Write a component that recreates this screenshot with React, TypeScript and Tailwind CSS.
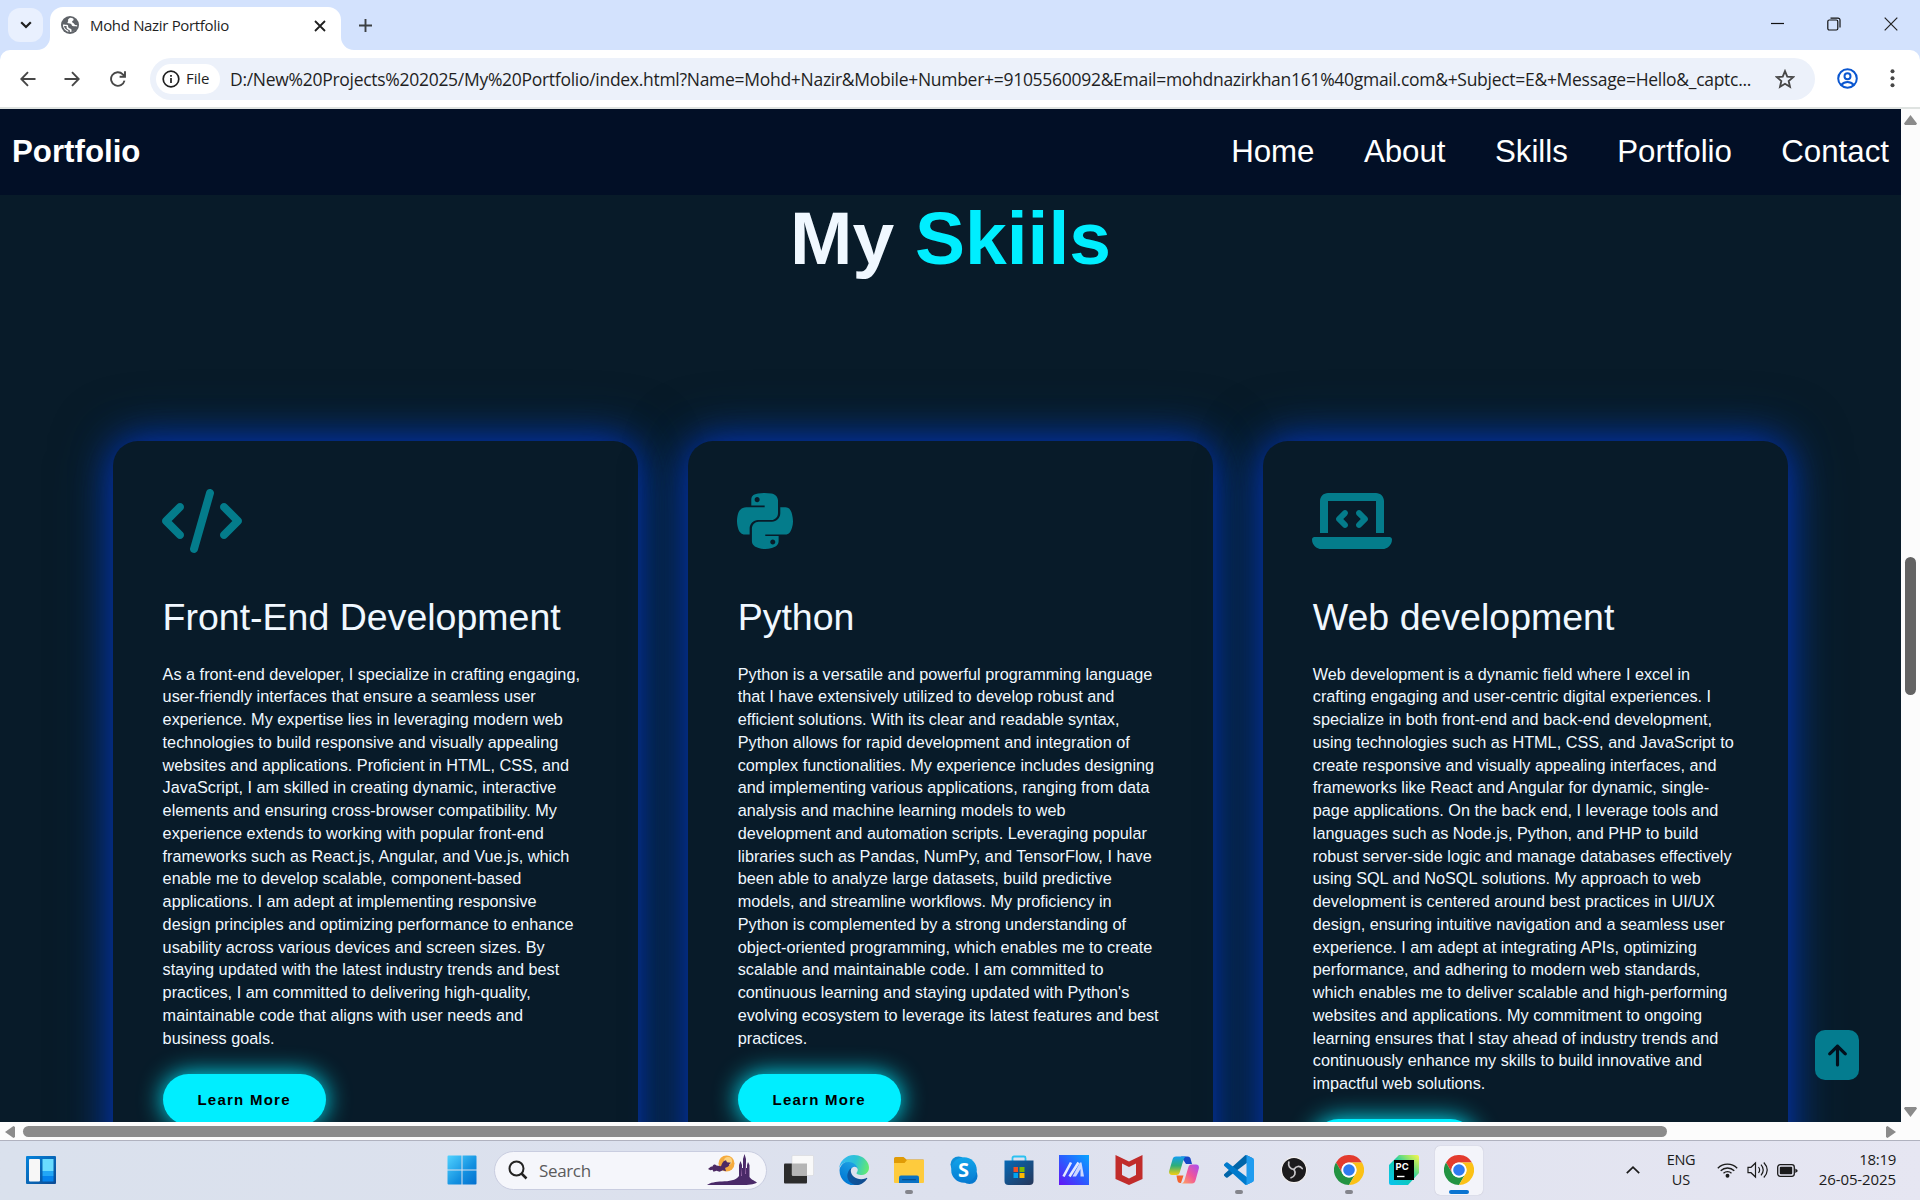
import React from "react";
import { FaCode, FaPython, FaLaptopCode, FaArrowUp } from "react-icons/fa6";

const cards = [
  {
    Icon: FaCode,
    iconClass: "h-16 w-20",
    title: "Front-End Development",
    lines: [
      "As a front-end developer, I specialize in crafting engaging,",
      "user-friendly interfaces that ensure a seamless user",
      "experience. My expertise lies in leveraging modern web",
      "technologies to build responsive and visually appealing",
      "websites and applications. Proficient in HTML, CSS, and",
      "JavaScript, I am skilled in creating dynamic, interactive",
      "elements and ensuring cross-browser compatibility. My",
      "experience extends to working with popular front-end",
      "frameworks such as React.js, Angular, and Vue.js, which",
      "enable me to develop scalable, component-based",
      "applications. I am adept at implementing responsive",
      "design principles and optimizing performance to enhance",
      "usability across various devices and screen sizes. By",
      "staying updated with the latest industry trends and best",
      "practices, I am committed to delivering high-quality,",
      "maintainable code that aligns with user needs and",
      "business goals.",
    ],
  },
  {
    Icon: FaPython,
    iconClass: "h-16 w-14",
    title: "Python",
    lines: [
      "Python is a versatile and powerful programming language",
      "that I have extensively utilized to develop robust and",
      "efficient solutions. With its clear and readable syntax,",
      "Python allows for rapid development and integration of",
      "complex functionalities. My experience includes designing",
      "and implementing various applications, ranging from data",
      "analysis and machine learning models to web",
      "development and automation scripts. Leveraging popular",
      "libraries such as Pandas, NumPy, and TensorFlow, I have",
      "been able to analyze large datasets, build predictive",
      "models, and streamline workflows. My proficiency in",
      "Python is complemented by a strong understanding of",
      "object-oriented programming, which enables me to create",
      "scalable and maintainable code. I am committed to",
      "continuous learning and staying updated with Python's",
      "evolving ecosystem to leverage its latest features and best",
      "practices.",
    ],
  },
  {
    Icon: FaLaptopCode,
    iconClass: "h-16 w-20",
    title: "Web development",
    lines: [
      "Web development is a dynamic field where I excel in",
      "crafting engaging and user-centric digital experiences. I",
      "specialize in both front-end and back-end development,",
      "using technologies such as HTML, CSS, and JavaScript to",
      "create responsive and visually appealing interfaces, and",
      "frameworks like React and Angular for dynamic, single-",
      "page applications. On the back end, I leverage tools and",
      "languages such as Node.js, Python, and PHP to build",
      "robust server-side logic and manage databases effectively",
      "using SQL and NoSQL solutions. My approach to web",
      "development is centered around best practices in UI/UX",
      "design, ensuring intuitive navigation and a seamless user",
      "experience. I am adept at integrating APIs, optimizing",
      "performance, and adhering to modern web standards,",
      "which enables me to deliver scalable and high-performing",
      "websites and applications. My commitment to ongoing",
      "learning ensures that I stay ahead of industry trends and",
      "continuously enhance my skills to build innovative and",
      "impactful web solutions.",
    ],
  },
];

function TabStrip() {
  return (
    <div className="flex h-[50px] bg-[#d3e2fd] pl-2">
      <div className="mt-2 flex h-[34px] w-[35px] items-center justify-center rounded-[12px] bg-[#e9f0fe]">
        <svg width="12" height="8" viewBox="0 0 12 8" fill="none" stroke="#1f1f1f" strokeWidth="2.2">
          <path d="M1.2 1.2 6 6l4.800-4.800" />
        </svg>
      </div>
      <div className="relative ml-[7px] mt-[7px] flex h-[43px] w-[291px] items-center rounded-t-[13px] bg-white pl-[11px] pr-[15px]">
        <svg className="absolute -left-[13px] bottom-0" width="13" height="13" fill="#fff">
          <path d="M13 0v13H0A13 13 0 0 0 13 0Z" />
        </svg>
        <svg className="absolute -right-[13px] bottom-0" width="13" height="13" fill="#fff">
          <path d="M0 0v13h13A13 13 0 0 1 0 0Z" />
        </svg>
        <svg className="-mt-[7px]" width="18" height="18" viewBox="0 0 18 18">
          <circle cx="9" cy="9" r="9" fill="#5f6368" />
          <path
            fill="#fff"
            d="M9.300 1.800c-1.300.8-2.600 1.400-2.200 2.600.4 1-.8 1.400-.6 2.400.3 1 2 .6 3.200 1 1.200.5.800 2 2 2.300 1.400.3 2.700.2 4.500-.2-.6 2.900-2.700 5.400-5.700 6.100-.4-1 .5-1.800-.2-2.800-.8-1-2.200-.6-2.900-1.700-.6-1 .2-2-.8-2.400C5.300 8.700 3.500 8.800 1.900 8.600c0 3.400 2.300 6.500 5.600 7.400l-.3-1.500C4.900 13.700 3.300 12 3 9.900l2.600.2c-.5 2.300.8 3.400 2.900 4 .5.200.2 1.500.5 2 3.900 0 7.100-3.100 7.200-7-1.400.2-2.400-.2-3-1.200-.5-1-1.800-.8-2.100-1.800-.3-1 .8-1.500 1.600-2.100l-.5-1.500c-.8-.4-1.900-.700-2.900-.7Z"
          />
        </svg>
        <span className="-mt-[7px] ml-[11px] grow whitespace-nowrap text-[15px] tracking-[-0.33px] text-[#1f1f1f]">
          Mohd Nazir Portfolio
        </span>
        <svg className="-mt-[6px]" width="12" height="12" viewBox="0 0 12 12" stroke="#1f1f1f" strokeWidth="1.800">
          <path d="m1 1 10 10M11 1 1 11" />
        </svg>
      </div>
      <svg className="ml-[18px] mt-[19px]" width="13" height="13" viewBox="0 0 13 13" stroke="#3c4043" strokeWidth="1.900">
        <path d="M6.500 0v13M0 6.500h13" />
      </svg>
      <div className="ml-auto mr-[22px] flex h-[48px] items-center gap-[43px]">
        <svg width="13" height="14" viewBox="0 0 13 14" stroke="#111" strokeWidth="1.200">
          <path d="M0 6.500h13" />
        </svg>
        <svg width="14" height="14" viewBox="0 0 14 14" fill="none" stroke="#111" strokeWidth="1.200">
          <rect x="0.800" y="3" width="10" height="10" rx="1.500" />
          <path d="M3.500 1.100h7.500a2 2 0 0 1 2 2v7.500" />
        </svg>
        <svg width="14" height="14" viewBox="0 0 14 14" stroke="#222" strokeWidth="1.200">
          <path d="m.7.7 12.600 12.600M13.300.7.7 13.300" />
        </svg>
      </div>
    </div>
  );
}

function Toolbar() {
  return (
    <div className="bg-[#d3e2fd]">
      <div className="flex h-[57px] items-center rounded-t-[10px] bg-white pl-[20px]">
        <svg width="16" height="16" viewBox="0 0 16 16" fill="none" stroke="#474747" strokeWidth="1.900">
          <path d="M15.500 8H1.500M8 1.200 1.300 8 8 14.800" />
        </svg>
        <svg className="ml-[28px]" width="16" height="16" viewBox="0 0 16 16" fill="none" stroke="#474747" strokeWidth="1.900">
          <path d="M.5 8h14M8 1.200 14.700 8 8 14.800" />
        </svg>
        <svg className="ml-[30px]" width="16" height="16" viewBox="0 0 16 16" fill="none" stroke="#474747" strokeWidth="1.900">
          <path d="M14.500 9.600A6.800 6.800 0 1 1 12.800 3.300L15 5.500M15 .3v5.400H9.600" />
        </svg>
        <div className="ml-[24px] flex h-[42px] w-[1665px] items-center rounded-full bg-[#ecf1fa] pl-[6px]">
          <div className="flex h-[30px] w-[64px] items-center rounded-full bg-white pl-[6px] text-[15px] font-medium tracking-[-0.1px] text-[#1f1f1f]">
            <svg width="18" height="18" viewBox="0 0 18 18" fill="none" stroke="#1f1f1f" strokeWidth="1.700">
              <circle cx="9" cy="9" r="7.800" />
              <path d="M9 8v5M9 5v1.700" />
            </svg>
            <span className="ml-[6px]">File</span>
          </div>
          <span className="ml-[10px] mt-[2px] whitespace-nowrap text-[17.5px] tracking-[-0.285px] text-[#1f1f1f]">
            D:/New%20Projects%202025/My%20Portfolio/index.html?Name=Mohd+Nazir&amp;Mobile+Number+=9105560092&amp;Email=mohdnazirkhan161%40gmail.com&amp;+Subject=E&amp;+Message=Hello&amp;_captc...
          </span>
          <svg className="ml-auto mr-[20px]" width="20" height="20" viewBox="0 0 24 24" fill="none" stroke="#474747" strokeWidth="2.200">
            <path d="m12 2.500 2.700 6.600 7.100.6-5.400 4.700 1.600 7-6-3.700-6 3.700 1.600-7L2.200 9.700l7.100-.6Z" />
          </svg>
        </div>
        <svg className="ml-[22px]" width="21" height="21" viewBox="0 0 21 21" fill="none" stroke="#0b57d0" strokeWidth="2">
          <circle cx="10.500" cy="10.500" r="9.300" />
          <circle cx="10.500" cy="8.300" r="3" />
          <path d="M4.200 17c2-2.200 4-3 6.300-3s4.300.8 6.300 3" />
        </svg>
        <svg className="ml-[32px]" width="5" height="19" viewBox="0 0 5 19" fill="#474747">
          <circle cx="2.500" cy="2.300" r="2" />
          <circle cx="2.500" cy="9.300" r="2" />
          <circle cx="2.500" cy="16.300" r="2" />
        </svg>
      </div>
      <div className="h-[2px] bg-[#dfe3e1]" />
    </div>
  );
}

function Page() {
  return (
    <div className="relative h-[1013px] w-[1901px] overflow-hidden bg-[#081b29] font-['Liberation_Sans',Arial,sans-serif] text-[#f0f8ff]">
      <nav className="flex h-[86px] items-center justify-between bg-[#020f26] px-3 text-[31.25px] leading-none text-white">
        <b>Portfolio</b>
        <div className="flex gap-[49.4px]">
          {["Home", "About", "Skills", "Portfolio", "Contact"].map((item) => (
            <span key={item}>{item}</span>
          ))}
        </div>
      </nav>
      <h2 className="text-center text-[75px] font-bold leading-[86px]">
        My <span className="text-[#00eeff]">Skiils</span>
      </h2>
      <div className="mt-[160px] flex items-stretch gap-[50px] pl-[113px]">
        {cards.map(({ Icon, iconClass, title, lines }) => (
          <section
            key={title}
            className="h-[760px] w-[525.1px] shrink-0 rounded-[25px] bg-[#081b29] px-[49.6px] pt-12 shadow-[0_0_38px_rgba(0,48,205,0.9),0_0_60px_rgba(6,74,120,0.5)]"
          >
            <Icon className={`${iconClass} -ml-[0.6px] text-[#047c8b]`} />
            <h3 className="mt-[43px] text-[37.5px] leading-[43px]">{title}</h3>
            <p className="mt-[23.5px] whitespace-pre text-[16.25px] leading-[22.75px]">{lines.join("\n")}</p>
            <button className="mt-[24.5px] h-[51px] w-[163px] rounded-full bg-[#00eeff] pt-px text-[15px] font-bold tracking-[1.25px] text-black shadow-[0_0_25px_#00eeff]">
              Learn More
            </button>
          </section>
        ))}
      </div>
      <div className="absolute bottom-[42px] right-[42px] flex h-[50px] w-[44px] items-center justify-center rounded-[10px] bg-[#047c8f]">
        <FaArrowUp className="size-[25px] text-[#020f1c]" />
      </div>
    </div>
  );
}

function VerticalScrollbar() {
  return (
    <div className="flex w-[19px] flex-col items-center bg-[#fcfcfc]">
      <svg className="mt-[6px]" width="13" height="10" fill="#8b8b8b">
        <path d="M6.500 0 13 8.500 12 10H1L0 8.500Z" />
      </svg>
      <div className="mt-[432px] h-[138px] w-[11px] rounded-full bg-[#636363]" />
      <svg className="mb-[5px] mt-auto" width="13" height="10" fill="#8b8b8b">
        <path d="M6.500 10 13 1.500 12 0H1L0 1.500Z" />
      </svg>
    </div>
  );
}

function HorizontalScrollbar() {
  return (
    <div className="flex h-[18px] items-center bg-[#fcfcfc]">
      <svg className="ml-[5px] mt-[1px]" width="10" height="12" fill="#8b8b8b">
        <path d="M0 6 8.500 0 10 1v10l-1.500 1Z" />
      </svg>
      <div className="ml-[8px] mt-[1px] h-[11px] w-[1644px] rounded-full bg-[#8b8b8b]" />
      <svg className="ml-auto mr-[24px] mt-[1px]" width="10" height="12" fill="#8b8b8b">
        <path d="M10 6 1.500 0 0 1v10l1.500 1Z" />
      </svg>
    </div>
  );
}

function Windows() {
  return (
    <svg width="30" height="30" viewBox="0 0 30 30">
      <defs>
        <linearGradient id="win" x1="0" y1="0" x2="1" y2="1">
          <stop offset="0" stopColor="#50d2ff" />
          <stop offset="0.600" stopColor="#1390e0" />
          <stop offset="1" stopColor="#0370cf" />
        </linearGradient>
      </defs>
      <path fill="url(#win)" d="M1.500.5h13v14H.5v-13a1 1 0 0 1 1-1ZM15.500.5h13a1 1 0 0 1 1 1v13h-14ZM.5 15.500h14v14h-13a1 1 0 0 1-1-1ZM15.500 15.500h14v13a1 1 0 0 1-1 1h-13Z" />
    </svg>
  );
}

function Widgets() {
  return (
    <svg width="30" height="28" viewBox="0 0 30 28">
      <defs>
        <linearGradient id="wid" x1="0" y1="0" x2="1" y2="1">
          <stop offset="0" stopColor="#0584dc" />
          <stop offset="1" stopColor="#0b4a93" />
        </linearGradient>
      </defs>
      <rect width="30" height="28" rx="1" fill="url(#wid)" />
      <rect x="3" y="3" width="11" height="22.500" rx="1" fill="#f7f7f7" />
      <rect x="16.500" y="3" width="11" height="12" fill="#69dcff" />
      <rect x="16.500" y="15" width="11" height="5" fill="#22a7f6" />
      <rect x="16.500" y="20" width="11" height="5.500" fill="#0583ec" />
    </svg>
  );
}

function TaskView() {
  return (
    <svg width="30" height="30" viewBox="0 0 30 30">
      <rect y="8.500" width="23" height="20" rx="1" fill="#2c2c2c" />
      <rect x="8" y="0.500" width="21.500" height="20" rx="1" fill="#f9f9f9" stroke="#ccc" strokeWidth=".4" />
      <rect x="8" y="8.500" width="15" height="12" fill="#b5b5b5" />
    </svg>
  );
}

function Edge() {
  return (
    <svg width="30" height="30" viewBox="0 0 256 256">
      <defs>
        <linearGradient id="eg1" x1="60" y1="177" x2="240" y2="177" gradientUnits="userSpaceOnUse">
          <stop offset="0" stopColor="#0c59a4" />
          <stop offset="1" stopColor="#114a8b" />
        </linearGradient>
        <linearGradient id="eg2" x1="130" y1="90" x2="40" y2="230" gradientUnits="userSpaceOnUse">
          <stop offset="0" stopColor="#1b9de2" />
          <stop offset="0.200" stopColor="#1595df" />
          <stop offset="1" stopColor="#0078d4" />
        </linearGradient>
        <linearGradient id="eg3" x1="10" y1="60" x2="250" y2="130" gradientUnits="userSpaceOnUse">
          <stop offset="0" stopColor="#35b8f1" />
          <stop offset="0.500" stopColor="#2cc3d4" />
          <stop offset="1" stopColor="#66eb6e" />
        </linearGradient>
      </defs>
      <path fill="url(#eg1)" d="M235.700 195.500a93.700 93.700 0 0 1-10.600 4.700 101.900 101.900 0 0 1-35.900 6.400c-47.300 0-88.500-32.500-88.500-74.300a31.500 31.500 0 0 1 16.400-27.300c-42.800 1.800-53.800 46.400-53.800 72.500 0 74 68.100 81.400 82.800 81.400 7.900 0 19.800-2.300 27-4.600l1.300-.4a128.300 128.300 0 0 0 66.600-52.800 4 4 0 0 0-5.300-5.600z" />
      <path fill="url(#eg2)" d="M105.700 241.400A79.200 79.200 0 0 1 83 220.100a80.700 80.700 0 0 1 34-115.300c3.200-1.500 8.500-4.100 15.600-4a32.400 32.400 0 0 1 25.700 13 31.900 31.900 0 0 1 6.300 18.700c0-.2 24.500-79.600-80-79.600-43.900 0-80 41.700-80 78.200a130.200 130.200 0 0 0 12.100 56 128 128 0 0 0 156.400 67 75.500 75.500 0 0 1-67.400-12.700z" />
      <path fill="url(#eg3)" d="M152.300 148.900c-.9 1-3.400 2.500-3.400 5.600 0 2.600 1.700 5.200 4.800 7.300 14.300 10 41.400 8.600 41.500 8.600a59.600 59.600 0 0 0 30.300-8.300 61.400 61.400 0 0 0 30.400-52.900c.3-22.400-8-37.300-11.300-43.900C223.500 23.900 177.700 0 128 0A128 128 0 0 0 0 126.200c.5-36.500 36.800-66 80-66 3.500 0 23.500.3 42 10 16.300 8.600 24.900 19 30.800 29.200 6.200 10.700 7.300 24.100 7.300 29.500 0 5.300-2.700 13.300-7.800 20z" />
    </svg>
  );
}

function Explorer() {
  return (
    <svg width="30" height="30" viewBox="0 0 30 30">
      <path d="M0 3.500A1.500 1.500 0 0 1 1.500 2h8l3 2.500H29a1 1 0 0 1 1 1V12H0Z" fill="#e09b06" />
      <path d="M0 8h10.500L13 5h17v22a1 1 0 0 1-1 1H1a1 1 0 0 1-1-1Z" fill="#fecb3d" />
      <path d="M5 28v-5.500a2 2 0 0 1 2-2h16a2 2 0 0 1 2 2V28Z" fill="#0a72c4" />
      <rect x="8" y="24" width="14" height="1.300" rx=".6" fill="#064f90" />
    </svg>
  );
}

function Skype() {
  return (
    <div className="relative flex size-[30px] items-center justify-center">
      <svg className="absolute inset-0" width="30" height="30" viewBox="0 0 30 30">
        <defs>
          <linearGradient id="sk" x1="0" y1="0" x2="0" y2="1">
            <stop offset="0" stopColor="#12a5ea" />
            <stop offset="1" stopColor="#067bd2" />
          </linearGradient>
        </defs>
        <circle cx="9.500" cy="9.500" r="8" fill="#0f8fd8" />
        <circle cx="20.500" cy="21" r="8" fill="#0679cf" />
        <circle cx="15" cy="15" r="12.800" fill="url(#sk)" />
      </svg>
      <span className="relative font-['Open_Sans',sans-serif] text-[20px] font-bold leading-none text-white">S</span>
    </div>
  );
}

function Store() {
  return (
    <svg width="30" height="30" viewBox="0 0 30 30">
      <defs>
        <linearGradient id="st" x1="0" y1="0" x2="1" y2="1">
          <stop offset="0" stopColor="#0669b6" />
          <stop offset="1" stopColor="#263659" />
        </linearGradient>
      </defs>
      <path d="M8.500 7V3a1.500 1.500 0 0 1 1.500-1.500h10A1.500 1.500 0 0 1 21.500 3v4" fill="none" stroke="#2bc1f1" strokeWidth="1.800" />
      <path d="M.5 5.500h29V26a4 4 0 0 1-4 4h-21a4 4 0 0 1-4-4Z" fill="url(#st)" />
      <path fill="#f25022" d="M9.500 12H14v5H9.500z" />
      <path fill="#7fba00" d="M15.500 12h5v5h-5z" />
      <path fill="#00a4ef" d="M9.500 18H14v5H9.500z" />
      <path fill="#ffb900" d="M15.500 18h5v5h-5z" />
    </svg>
  );
}

function Asus() {
  return (
    <svg width="30" height="30" viewBox="0 0 30 30">
      <defs>
        <linearGradient id="as" x1="1" y1="0" x2="0" y2="1">
          <stop offset="0" stopColor="#08a5ff" />
          <stop offset="0.500" stopColor="#2a5cff" />
          <stop offset="1" stopColor="#6413f5" />
        </linearGradient>
      </defs>
      <rect width="30" height="30" fill="url(#as)" />
      <path d="m4.500 21.500 7.500-14M10.500 21.500l9-14" stroke="#e2e9ff" strokeWidth="2.600" />
      <path d="M22.500 7.500 25 21.500h-3.500V14L17 21.500h-3.500L21 7.500Z" fill="#cdd8ff" />
    </svg>
  );
}

function McAfee() {
  return (
    <svg width="30" height="30" viewBox="0 0 30 30">
      <path fill="#c12c2b" d="M1.500 0 15 6.500 28.500 0v24L15 30 1.500 24ZM8 8.500v11.500l7 3.500 7-3.500V8.500L15 12Z" />
    </svg>
  );
}

function Copilot() {
  return (
    <svg width="30" height="30" viewBox="0 0 30 30">
      <defs>
        <linearGradient id="cp1" x1="0" y1="0" x2="0" y2="1">
          <stop offset="0" stopColor="#139ef0" />
          <stop offset="0.500" stopColor="#2fae77" />
          <stop offset="1" stopColor="#f5cf11" />
        </linearGradient>
        <linearGradient id="cp2" x1="1" y1="0" x2="0" y2="1">
          <stop offset="0" stopColor="#a64cf4" />
          <stop offset="0.500" stopColor="#f0569a" />
          <stop offset="1" stopColor="#ffa85b" />
        </linearGradient>
      </defs>
      <path d="M12 1.500h6.500c2 0 2.800 1.200 3.300 3L23 9h-6Z" fill="#1648c7" />
      <path d="M7.500 20.500h7l-2.500 7.500h-.7c-2 0-2.500-1.200-3-3Z" fill="#f2622d" />
      <path d="M7 1.500h11c-2 0-3 1.500-3.500 3.300l-3.700 12.500C10.200 19.500 9 20 7.500 20H3c-2.500 0-3.500-2-2.700-4.500L3.500 4.500C4 2.500 5 1.500 7 1.500Z" fill="url(#cp1)" />
      <path d="M23 28.500H12c2 0 3-1.500 3.500-3.300l3.700-12.500c.6-2.200 1.800-3.200 3.300-3.200H27c2.500 0 3.500 2 2.700 4.500l-3.200 11.500c-.5 2-1.500 3-3.500 3Z" fill="url(#cp2)" />
    </svg>
  );
}

function VSCode() {
  return (
    <svg width="30" height="30" viewBox="0 0 100 100">
      <path fill="#0065a9" d="M96.500 10.800 75.900.9a6.200 6.200 0 0 0-7.100 1.200L1.300 63.600a4.200 4.200 0 0 0 0 6.100l5.500 5a4.200 4.200 0 0 0 5.300.3l81.300-61.700c2.700-2.100 6.600-.1 6.600 3.300v-.2a6.300 6.300 0 0 0-3.500-5.600Z" />
      <path fill="#007acc" d="m96.500 89.200-20.600 9.900a6.200 6.200 0 0 1-7.100-1.200L1.300 36.400a4.200 4.200 0 0 1 0-6.100l5.500-5a4.200 4.200 0 0 1 5.300-.3l81.300 61.700c2.700 2.100 6.600.1 6.600-3.300v.2a6.300 6.300 0 0 1-3.500 5.600Z" />
      <path fill="#1f9cf0" d="M75.900 99.100a6.200 6.200 0 0 1-7.100-1.200c2.300 2.300 6.200.7 6.200-2.600V4.700c0-3.300-3.900-4.900-6.200-2.600a6.200 6.200 0 0 1 7.100-1.200l20.600 9.900a6.300 6.300 0 0 1 3.500 5.600v67.200a6.300 6.300 0 0 1-3.500 5.600Z" />
    </svg>
  );
}

function Obs() {
  return (
    <svg width="30" height="30" viewBox="0 0 30 30">
      <circle cx="15" cy="15" r="12.600" fill="#1c1b1d" stroke="#f3f0f0" strokeWidth="1.200" />
      <g fill="none" stroke="#c7c5c8" strokeWidth="1.700" strokeLinecap="round">
        <path d="M15 14.500c-4.200-.5-6-3.700-5.200-7.500" />
        <path d="M15 14.500c2-3.700 5.700-4 8.200-1" />
        <path d="M15 14.500c2.300 3.500.8 7-3 8.200" />
      </g>
    </svg>
  );
}

function Chrome() {
  return (
    <svg width="30" height="30" viewBox="0 0 30 30">
      <path fill="#e33b2e" d="M2 7.500A15 15 0 0 1 28 7.500H15a7.500 7.500 0 0 0-6.500 11.300Z" />
      <path fill="#229342" d="M2 7.500l6.500 11.300A7.500 7.500 0 0 0 21.500 18.800L15 30A15 15 0 0 1 2 7.500Z" />
      <path fill="#fbc116" d="M28 7.500A15 15 0 0 1 15 30l6.500-11.200A7.500 7.500 0 0 0 15 7.500Z" />
      <circle cx="15" cy="15" r="7.500" fill="#fff" />
      <circle cx="15" cy="15" r="5.800" fill="#2f7af0" />
    </svg>
  );
}

function PyCharm() {
  return (
    <div className="relative size-[30px]">
      <svg className="absolute inset-0" width="30" height="30" viewBox="0 0 30 30">
        <defs>
          <linearGradient id="pc" x1="1" y1="0" x2="0" y2="1">
            <stop offset="0" stopColor="#fcf84a" />
            <stop offset="0.250" stopColor="#8de36f" />
            <stop offset="0.500" stopColor="#0fc9b0" />
            <stop offset="1" stopColor="#07c3f2" />
          </linearGradient>
        </defs>
        <path d="M10 0h18a2 2 0 0 1 2 2v16L19 30H2a2 2 0 0 1-2-2V10Z" fill="url(#pc)" />
        <path d="M5 5h20v20H5z" fill="#000" />
        <path d="M8 21.500h7.500" stroke="#fff" strokeWidth="1.400" />
      </svg>
      <span className="absolute left-[7px] top-[6px] font-['Inter',sans-serif] text-[9.5px] font-bold leading-[11px] text-white">PC</span>
    </div>
  );
}

function Castle() {
  return (
    <svg width="50" height="32" viewBox="0 0 50 32">
      <circle cx="19.500" cy="9.500" r="8" fill="#f5ab3e" />
      <circle cx="21" cy="7" r="4" fill="#fcd280" />
      <path d="M1 15c1.500-1 2.500-3 4.500-2.500 1-2.500 2.500-2.500 4-1l4.500.8c1-4 3-6 5-6l1 2 4 .5-2 1.700c1 1.500-2 3-4 3.300l1 3.500-3-1-3.500 1.500-3-1-3 1-1-2-2 .5Z" fill="#4c2a63" />
      <path d="M0 31c3-2.500 9-3.300 15-3.500 7-.3 14-1 17-5.500V11l1.500-4 1.500 4v3h1V5l1.500-5L39 5v9h1v-3l1-3 1.500 3v12c2 3 6 4 7.500 5.500-3 2.300-9 2.500-15 2.500Z" fill="#4a2a68" />
      <path d="M34 22V13l1 9M38 20V8l1 12" fill="#9a6aa8" />
    </svg>
  );
}

const apps = [
  { App: TaskView },
  { App: Edge },
  { App: Explorer, open: true },
  { App: Skype },
  { App: Store },
  { App: Asus },
  { App: McAfee },
  { App: Copilot },
  { App: VSCode, open: true },
  { App: Obs },
  { App: Chrome, open: true },
  { App: PyCharm },
  { App: Chrome, active: true },
];

function Taskbar() {
  return (
    <div className="flex h-[60px] items-center border-t border-[#b0b2bf] bg-linear-to-r from-[#dae1ed] via-[#dde1ee] to-[#e6e6f2] pb-px font-['Open_Sans','Noto_Sans',sans-serif] text-[#1b1b1b]">
      <div className="ml-[26px] w-[421px]">
        <Widgets />
      </div>
      <Windows />
      <div className="ml-[17px] flex h-[39px] w-[273px] items-center rounded-full border border-[#c9cde0] bg-[#f5f6fb] pl-[13px] pr-[9px]">
        <svg width="20" height="20" viewBox="0 0 20 20" fill="none" stroke="#222" strokeWidth="2">
          <circle cx="8.500" cy="8.500" r="7" />
          <path d="m13.500 13.500 5 5" strokeWidth="2.500" />
        </svg>
        <span className="ml-[11px] mt-px grow text-[17px] tracking-[-0.35px] text-[#5b5b5b]">Search</span>
        <Castle />
      </div>
      <div className="ml-[4px] flex">
        {apps.map(({ App: AppIcon, open, active }, i) => (
          <div key={i} className="flex w-[55px] justify-center">
            <div
              className={
                active
                  ? "relative flex h-[49px] w-[48px] items-center justify-center rounded-[5px] bg-[#f3f4fa] shadow-[0_0_1px_#aab]"
                  : "relative flex h-[49px] w-[48px] items-center justify-center"
              }
            >
              <AppIcon />
              {open && <i className="absolute bottom-[1px] left-5 h-1 w-2 rounded-full bg-[#84858c]" />}
              {active && <i className="absolute bottom-[1px] left-[14px] h-1 w-5 rounded-full bg-[#0a74d1]" />}
            </div>
          </div>
        ))}
      </div>
      <svg className="ml-auto" width="14" height="8" viewBox="0 0 14 8" fill="none" stroke="#1b1b1b" strokeWidth="1.700">
        <path d="m.8 7.200 6.200-6 6.200 6" />
      </svg>
      <div className="ml-[25px] w-[32px] text-center text-[14.5px] leading-5">
        <span className="block tracking-[-0.3px]">ENG</span>
        <span className="block">US</span>
      </div>
      <svg className="ml-[20px]" width="21" height="16" viewBox="0 0 21 16" fill="none" stroke="#1b1b1b" strokeWidth="1.300">
        <path d="M.8 6.200a13.800 13.800 0 0 1 19.400 0M3.700 8.800a9.700 9.700 0 0 1 13.600 0M6.500 11.300a5.700 5.700 0 0 1 8 0" />
        <circle cx="10.500" cy="13.800" r="1.300" fill="#1b1b1b" />
      </svg>
      <svg className="ml-[9px]" width="21" height="18" viewBox="0 0 21 18" fill="none" stroke="#1b1b1b" strokeWidth="1.200">
        <path d="M1 6.300h3L8.500 2v14L4 11.700H1ZM11.500 6c1.500 2 1.500 4 0 6M14 3.700c3 3.500 3 7 0 10.600M16.800 1.500c4.300 4.700 4.300 10.300 0 15" />
      </svg>
      <svg className="ml-[9px]" width="21" height="13" viewBox="0 0 21 13">
        <rect x=".7" y=".7" width="16.600" height="11.600" rx="2.500" fill="none" stroke="#1b1b1b" strokeWidth="1.300" />
        <rect x="2.800" y="2.800" width="12.400" height="7.400" rx="1" fill="#1b1b1b" />
        <path d="M18.300 4.500 20.500 6v1.500L18.300 9Z" fill="#1b1b1b" />
      </svg>
      <div className="mb-[2px] ml-[14px] mr-[24px] w-[84px] text-right text-[15px] leading-5">
        <span className="block tracking-[-0.3px]">18:19</span>
        <span className="block whitespace-nowrap tracking-[-0.1px]">26-05-2025</span>
      </div>
    </div>
  );
}

export default function App() {
  return (
    <div className="h-[1200px] w-[1920px] overflow-hidden font-['Open_Sans','Noto_Sans',sans-serif]">
      <TabStrip />
      <Toolbar />
      <div className="flex">
        <Page />
        <VerticalScrollbar />
      </div>
      <HorizontalScrollbar />
      <Taskbar />
    </div>
  );
}
